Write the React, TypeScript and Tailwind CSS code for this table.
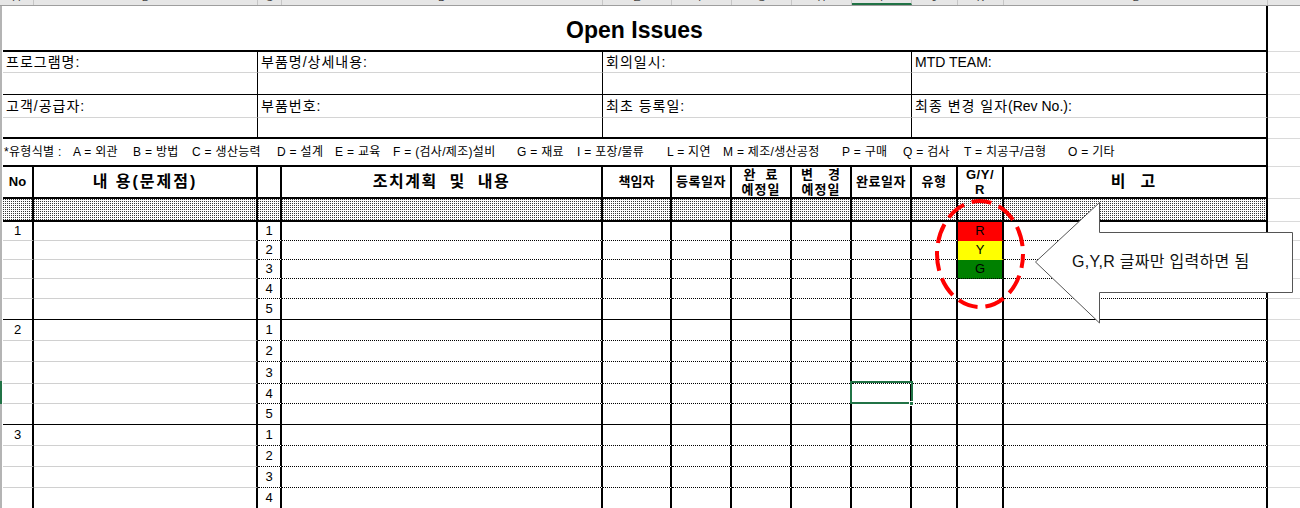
import React from "react";

const font = "font-['Liberation_Sans','Noto_Sans_CJK_KR',sans-serif]";

const colW = [
  "w-[31px]",
  "w-[224px]",
  "w-[24px]",
  "w-[321px]",
  "w-[69px]",
  "w-[60px]",
  "w-[60px]",
  "w-[60px]",
  "w-[60px]",
  "w-[46px]",
  "w-[46px]",
  "w-[264px]",
];

const stripW = [
  "w-[34px]",
  "w-[224px]",
  "w-[24px]",
  "w-[321px]",
  "w-[69px]",
  "w-[60px]",
  "w-[60px]",
  "w-[60px]",
  "w-[60px]",
  "w-[46px]",
  "w-[46px]",
  "w-[264px]",
];
const letters = ["A", "B", "C", "D", "E", "F", "G", "H", "I", "J", "K", "L"];

const types = [
  { w: "w-[69px]", t: "*유형식별 : " },
  { w: "w-[60px]", t: "A = 외관" },
  { w: "w-[59px]", t: "B = 방법" },
  { w: "w-[85px]", t: "C = 생산능력" },
  { w: "w-[58px]", t: "D = 설계" },
  { w: "w-[58px]", t: "E = 교육" },
  { w: "w-[124px]", t: "F = (검사/제조)설비" },
  { w: "w-[60px]", t: "G = 재료" },
  { w: "w-[90px]", t: "I = 포장/물류" },
  { w: "w-[56px]", t: "L = 지연" },
  { w: "w-[119px]", t: "M = 제조/생산공정" },
  { w: "w-[61px]", t: "P = 구매" },
  { w: "w-[61px]", t: "Q = 검사" },
  { w: "w-[104px]", t: "T = 치공구/금형" },
  { w: "w-[60px]", t: "O = 기타" },
];

const groups = [
  { no: "1", rows: ["h-[19px]", "h-[19px]", "h-[19px]", "h-[20px]", "h-[21px]"] },
  { no: "2", rows: ["h-[21px]", "h-[21px]", "h-[22px]", "h-[20px]", "h-[21px]"] },
  { no: "3", rows: ["h-[21px]", "h-[21px]", "h-[21px]", "h-[21px]", "h-[21px]"] },
];

const gyr = [
  { bg: "bg-[#ff0000] border-b-transparent", t: "R" },
  { bg: "bg-[#ffff00] border-b-transparent", t: "Y" },
  { bg: "bg-[#008000]", t: "G" },
];

const Gutter = () => <div className="w-[3px] shrink-0 self-stretch border-l-2 border-[#b4b4b4]" />;
const Filler = () => <div className="flex-1 self-stretch border-b border-[#dadada]" />;

// dotted fill like Excel's light gray pattern
const hatch =
  "bg-[#3a3a3a] bg-[linear-gradient(90deg,transparent_1px,#fff_1px),linear-gradient(180deg,transparent_1px,#fff_1px)] bg-[length:2px_2px] bg-size-[2px_2px]";

const headers: React.ReactNode[] = [
  <span className="text-[13px] font-bold">No</span>,
  <span className="text-[16px] font-bold tracking-[2px]">내 용(문제점)</span>,
  null,
  <span className="text-[16px] font-bold tracking-[1.5px] whitespace-pre">조치계획  및  내용</span>,
  <span className="text-[13px] font-bold">책임자</span>,
  <span className="text-[13px] font-bold tracking-[0.5px]">등록일자</span>,
  <span className="flex flex-col items-center text-[13px] font-bold leading-[15px] tracking-[1px]">
    <span className="whitespace-pre">완  료</span>
    <span>예정일</span>
  </span>,
  <span className="flex flex-col items-center text-[13px] font-bold leading-[15px] tracking-[1px]">
    <span className="whitespace-pre">변   경</span>
    <span>예정일</span>
  </span>,
  <span className="text-[13px] font-bold tracking-[0.5px]">완료일자</span>,
  <span className="text-[13px] font-bold tracking-[0.5px]">유형</span>,
  <span className="flex flex-col items-center text-[13px] font-bold leading-[15px] tracking-[0.5px]">
    <span>G/Y/</span>
    <span>R</span>
  </span>,
  <span className="flex gap-[15px] pr-[4px] text-[16px] font-bold">
    <span>비</span>
    <span>고</span>
  </span>,
];

const infoW = ["w-[255px] border-r", "w-[345px] border-r", "w-[309px] border-r", "w-[356px] border-r-2"];

const InfoRow = ({
  h,
  bottom,
  labels,
}: {
  h: string;
  bottom: string;
  labels?: React.ReactNode[];
}) => (
  <div className={`flex ${h}`}>
    <Gutter />
    {infoW.map((w, i) => (
      <div key={i} className={`${w} ${bottom} flex items-center border-r-black pl-[3px] text-[14px]`}>
        {labels ? labels[i] : null}
      </div>
    ))}
    <Filler />
  </div>
);

export default function App() {
  return (
    <div className={`relative h-[508px] w-[1300px] overflow-hidden bg-white text-black ${font}`}>
      {/* column header strip */}
      <div className="flex h-[6px] overflow-hidden border-b border-[#9e9e9e] bg-[#e6e6e6]">
        {stripW.map((w, i) => (
          <div
            key={i}
            className={`${w} flex shrink-0 justify-center border-r border-[#c6c6c6] ${
              i === 8 ? "border-b-2 border-b-[#217346]" : ""
            }`}
          >
            <span className="-mt-[8px] text-[11px] leading-[11px] text-[#444]">{letters[i]}</span>
          </div>
        ))}
        <div className="flex-1" />
      </div>

      {/* title */}
      <div className="flex h-[46px]">
        <Gutter />
        <div className="flex w-[1265px] items-center justify-center border-r-2 border-b-2 border-black pt-[4px]">
          <span className="text-[23px] font-bold">Open Issues</span>
        </div>
        <Filler />
      </div>

      <InfoRow
        h="h-[21px]"
        bottom="border-b border-b-[#d4d4d4]"
        labels={[
          <span className="tracking-[1px]">프로그램명:</span>,
          <span className="tracking-[1px]">부품명/상세내용:</span>,
          <span className="tracking-[1px]">회의일시:</span>,
          <span>MTD TEAM:</span>,
        ]}
      />
      <InfoRow h="h-[22px]" bottom="border-b border-b-black" />
      <InfoRow
        h="h-[23px]"
        bottom="border-b border-b-[#d4d4d4]"
        labels={[
          <span className="tracking-[1px]">고객/공급자:</span>,
          <span className="tracking-[1px]">부품번호:</span>,
          <span className="tracking-[1px]">최초 등록일:</span>,
          <span>
            <span className="tracking-[1px]">최종 변경 일자</span>(Rev No.):
          </span>,
        ]}
      />
      <InfoRow h="h-[21px]" bottom="border-b-2 border-b-black" />

      {/* type legend */}
      <div className="flex h-[28px]">
        <Gutter />
        <div className="flex w-[1265px] items-center border-r-2 border-b-2 border-black pl-[1px] text-[12px] tracking-[0.3px] whitespace-pre">
          {types.map((t) => (
            <span key={t.t} className={`${t.w} shrink-0`}>
              {t.t}
            </span>
          ))}
        </div>
        <Filler />
      </div>

      {/* header row */}
      <div className="flex h-[32px]">
        <Gutter />
        {colW.map((w, i) => (
          <div key={i} className={`${w} flex shrink-0 items-center justify-center border-r-2 border-b-2 border-black`}>
            {headers[i]}
          </div>
        ))}
        <Filler />
      </div>

      {/* hatched row */}
      <div className="flex h-[23px]">
        <Gutter />
        {colW.map((w, i) => (
          <div key={i} className={`${w} shrink-0 border-r-2 border-b-2 border-black ${hatch}`} />
        ))}
        <Filler />
      </div>

      {/* data rows */}
      {groups.map((g, gi) =>
        g.rows.map((h, ri) => {
          const last = ri === 4;
          return (
            <div key={`${gi}-${ri}`} className={`flex ${h}`}>
              <Gutter />
              {colW.map((w, ci) => {
                let cls = "";
                if (ci < 2) {
                  cls = last ? "border-b border-b-black" : "border-b border-b-[#d0d0d0]";
                } else if (last) {
                  cls = "border-b border-b-black";
                } else {
                  cls = "border-b border-b-black [border-bottom-style:dotted]";
                }
                let content: React.ReactNode = null;
                if (ci === 0 && ri === 0) content = g.no;
                if (ci === 2) content = String(ri + 1);
                if (ci === 10 && gi === 0 && ri < 3) {
                  cls += ` ${gyr[ri].bg}`;
                  content = gyr[ri].t;
                }
                return (
                  <div
                    key={ci}
                    className={`${w} flex shrink-0 items-center justify-center border-r-2 border-r-black text-[13px] ${cls}`}
                  >
                    {content}
                  </div>
                );
              })}
              <Filler />
            </div>
          );
        })
      )}

      {/* selected cell */}
      <div className="absolute left-[850px] top-[381px] h-[23px] w-[63px] border-2 border-[#217346]" />
      <div className="absolute left-[909px] top-[401px] h-[5px] w-[5px] border border-white bg-[#217346]" />
      <div className="absolute left-0 top-[381px] h-[23px] w-[2px] bg-[#217346]" />

      {/* annotation */}
      <svg className="pointer-events-none absolute left-0 top-0" width="1300" height="508">
        <ellipse
          cx="980"
          cy="254"
          rx="43"
          ry="53"
          fill="none"
          stroke="#ff0000"
          strokeWidth="4"
          strokeDasharray="20 8"
          strokeDashoffset="6"
        />
        <polygon
          points="1035.5,262 1099.5,202.5 1099.5,232.5 1292.5,232.5 1292.5,292.5 1099.5,292.5 1099.5,323"
          fill="#fff"
          stroke="#555"
          strokeWidth="1"
        />
      </svg>
      <div className="absolute left-[1072px] top-[251px] text-[16px] leading-[22px] tracking-[0.3px] whitespace-pre text-[#111]">
        G,Y,R 글짜만 입력하면 됨
      </div>
    </div>
  );
}
